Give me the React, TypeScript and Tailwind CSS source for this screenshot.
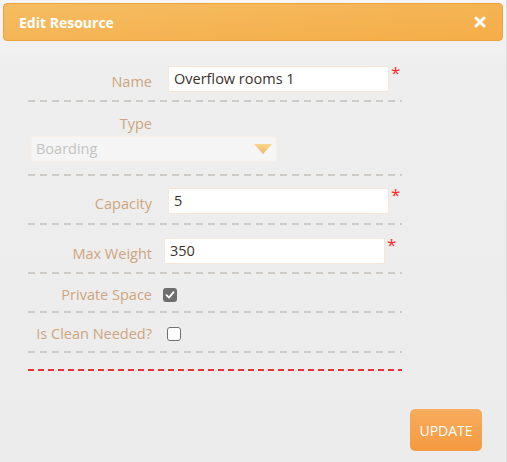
import React from "react";

const FONT = "font-['Segoe_UI','Open_Sans','Noto_Sans',sans-serif]";

function Dash({ red = false }: { red?: boolean }) {
  return red ? (
    <div className="h-[2px] w-full bg-[repeating-linear-gradient(90deg,#f03030_0_6px,transparent_6px_10px)]" />
  ) : (
    <div className="h-[2px] w-full bg-[repeating-linear-gradient(90deg,#cfcbc6_0_7px,transparent_7px_12px)]" />
  );
}

function Label({ children }: { children: React.ReactNode }) {
  return (
    <div className="w-[124px] shrink-0 text-right text-[14.5px] leading-[20px] text-[#cda57f]">{children}</div>
  );
}

function TextInput({ value, ml = "ml-4" }: { value: string; ml?: string }) {
  return (
    <div className={`${ml} flex items-start`}>
      <div className="flex h-[26px] w-[221px] items-center rounded-[2px] border border-[#f6e7d9] bg-white px-[5px] text-[14.5px] text-[#3a322b]">
        {value}
      </div>
      <span className="ml-[2px] -mt-[2px] text-[17px] leading-none text-[#ff2a2a]">*</span>
    </div>
  );
}

function InputRow({ label, value, ml, pt, pb }: { label: string; value: string; ml?: string; pt: string; pb: string }) {
  return (
    <div className={`flex items-start ${pt} ${pb}`}>
      <div className="pt-[6px]">
        <Label>{label}</Label>
      </div>
      <TextInput value={value} ml={ml} />
    </div>
  );
}

export default function App() {
  return (
    <div className={`${FONT} h-[462px] w-[507px] overflow-hidden border-r border-[#dcdcdc] bg-[linear-gradient(180deg,#f6f6f6_0px,#eeeeee_70px,#ececec_100%)]`}>
      <div className="mx-[3px] mt-[3px] flex h-[38px] items-center justify-between rounded-[4px] border border-[#eea23e] bg-[linear-gradient(175deg,#f5bd62_0%,#f5b352_60%,#f5ae48_100%)] pl-[15px] pr-[15px]">
        <span className="text-[14px] font-bold text-white">Edit Resource</span>
        <svg width="12" height="12" viewBox="0 0 12 12" className="mr-[1px]">
          <path d="M2 2 L10 10 M10 2 L2 10" stroke="white" strokeWidth="3" strokeLinecap="round" />
        </svg>
      </div>

      <div className="ml-[28px] w-[374px]">
        <InputRow label="Name" value="Overflow rooms 1" pt="pt-[25px]" pb="pb-[8px]" />
        <Dash />

        {/* Type */}
        <div className="pt-[12px] pb-[12px]">
          <div className="flex">
            <Label>Type</Label>
          </div>
          <div className="ml-[3px] mt-[2px] flex h-[26px] w-[246px] items-center justify-between rounded-[2px] border border-[#f7eee5] bg-[#f5f5f5] pl-[4px] pr-[4px] text-[14.5px] text-[#c3c3c3]">
            <span>Boarding</span>
            <svg width="18" height="10" viewBox="0 0 18 10">
              <defs>
                <linearGradient id="tri" x1="0" y1="0" x2="0" y2="1">
                  <stop offset="0" stopColor="#fbd98a" />
                  <stop offset="1" stopColor="#f0b269" />
                </linearGradient>
              </defs>
              <path d="M0 0 H18 L9 10 Z" fill="url(#tri)" />
            </svg>
          </div>
        </div>
        <Dash />

        <InputRow label="Capacity" value="5" pt="pt-[12px]" pb="pb-[9px]" />
        <Dash />

        <InputRow label="Max Weight" value="350" ml="ml-3" pt="pt-[13px]" pb="pb-[8px]" />
        <Dash />

        {/* Private Space */}
        <div className="flex h-[37px] items-start pt-[11px]">
          <Label>Private Space</Label>
          <div className="ml-[11px] mt-[3px] flex h-[14px] w-[14px] items-center justify-center rounded-[3px] bg-[#6e6e6e]">
            <svg width="10" height="10" viewBox="0 0 10 10">
              <path d="M1.5 5.2 L4 7.6 L8.6 2.2" fill="none" stroke="white" strokeWidth="1.8" strokeLinecap="round" strokeLinejoin="round" />
            </svg>
          </div>
        </div>
        <Dash />

        {/* Is Clean Needed */}
        <div className="flex h-[38px] items-start pt-[11px]">
          <Label>Is Clean Needed?</Label>
          <div className="ml-[15px] mt-[3px] h-[14px] w-[14px] rounded-[3px] border border-[#6f6f6f] bg-white" />
        </div>
        <Dash />

        <div className="pt-[16px]">
          <Dash red />
        </div>
      </div>

      <div className="mt-[38px] flex justify-end pr-[24px]">
        <button className="flex h-[42px] w-[72px] items-center justify-center rounded-[5px] bg-[linear-gradient(180deg,#f8ac5e_0%,#f59a40_100%)] text-[14px] text-white">
          UPDATE
        </button>
      </div>
    </div>
  );
}
